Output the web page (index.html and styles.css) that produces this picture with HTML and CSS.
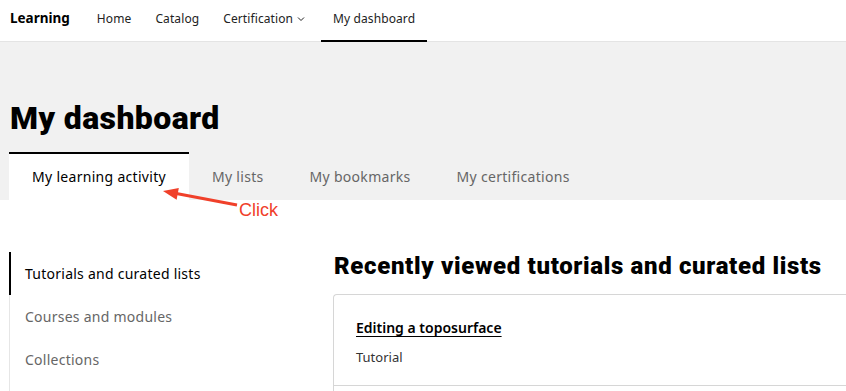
FILE: index.html
```html
<!DOCTYPE html>
<html lang="en">
<head>
  <meta charset="UTF-8">
  <meta name="viewport" content="width=device-width, initial-scale=1.0">
  <title>My dashboard</title>
  <link rel="stylesheet" href="styles.css">
</head>
<body>

<header class="topnav">
  <a class="brand" href="#">Learning</a>
  <nav class="topnav-links">
    <a href="#">Home</a>
    <a href="#">Catalog</a>
    <a href="#">Certification
      <svg class="chevron" width="8" height="6" viewBox="0 0 8 6"><path d="M1 1.5 L4 4.5 L7 1.5" fill="none" stroke="#222" stroke-width="1"/></svg>
    </a>
    <a href="#" class="active">My dashboard</a>
  </nav>
</header>

<section class="hero">
  <h1>My dashboard</h1>
  <div class="tabs">
    <a href="#" class="tab active">My learning activity</a>
    <a href="#" class="tab">My lists</a>
    <a href="#" class="tab">My bookmarks</a>
    <a href="#" class="tab">My certifications</a>
  </div>
</section>

<div class="annotation">
  <svg class="arrow" width="90" height="30" viewBox="0 0 90 30">
    <line x1="20" y1="12.3" x2="82" y2="24" stroke="#f0402a" stroke-width="3"/>
    <polygon points="8,10 21.6,18.7 23.8,6.9" fill="#f0402a"/>
  </svg>
  <span class="click">Click</span>
</div>

<main class="layout">
  <aside class="sidebar">
    <a href="#" class="side-item active">Tutorials and curated lists</a>
    <a href="#" class="side-item">Courses and modules</a>
    <a href="#" class="side-item">Collections</a>
  </aside>

  <section class="content">
    <h2>Recently viewed tutorials and curated lists</h2>
    <div class="card">
      <div class="card-row">
        <a href="#" class="card-title">Editing a toposurface</a>
        <div class="card-type">Tutorial</div>
      </div>
      <div class="card-row"></div>
    </div>
  </section>
</main>

</body>
</html>
```

FILE: styles.css
```css
body {
  margin: 0;
  font-family: "Noto Sans", sans-serif;
  color: #1a1a1a;
  background-color: #fff;
  overflow: hidden;
  position: relative;
}

a {
  color: inherit;
  text-decoration: none;
}

.topnav {
  display: flex;
  align-items: stretch;
  height: 42px;
  padding-left: 10px;
  border-bottom: 1px solid #e4e4e4;
  box-sizing: border-box;
}

.brand {
  display: flex;
  align-items: center;
  padding-bottom: 5px;
  font-weight: 700;
  font-size: 13.5px;
  color: #000;
  margin-right: 15px;
}

.topnav-links {
  display: flex;
}

.topnav-links a {
  display: flex;
  align-items: center;
  gap: 4px;
  padding: 0 12px 4px;
  font-size: 12px;
  letter-spacing: 0.1px;
  color: #222;
  border-bottom: 2px solid transparent;
  margin-bottom: -1px;
}

.topnav-links a.active {
  border-bottom-color: #000;
}

.chevron {
  margin: 1px 4px 0 0;
}

.hero {
  background-color: #f1f1f1;
  padding: 56px 9px 0;
}

h1 {
  margin: 0 0 14px 1px;
  font-family: Roboto, sans-serif;
  font-weight: 900;
  font-size: 32px;
  line-height: 40px;
  letter-spacing: 0.4px;
  color: #000;
}

.tabs {
  display: flex;
}

.tab {
  display: flex;
  align-items: center;
  height: 46px;
  padding: 0 23px;
  border-top: 2px solid transparent;
  font-size: 14px;
  line-height: 18px;
  letter-spacing: 0.3px;
  color: #666;
}

.tab.active {
  background-color: #fff;
  border-top-color: #000;
  color: #000;
}

.annotation {
  position: absolute;
  left: 155px;
  top: 181px;
}

.arrow {
  display: block;
}

.click {
  position: absolute;
  left: 84px;
  top: 20px;
  font-family: "Liberation Sans", sans-serif;
  font-size: 18px;
  line-height: 1;
  color: #f0402a;
}

.layout {
  display: flex;
  padding: 52px 0 0 9px;
}

.sidebar {
  width: 324px;
  box-sizing: border-box;
  flex-shrink: 0;
  display: flex;
  flex-direction: column;
  align-self: flex-start;
  border-left: 1px solid #e6e6e6;
  padding-bottom: 20px;
}

.side-item {
  display: flex;
  align-items: center;
  height: 43px;
  padding-left: 14px;
  margin-left: -1px;
  border-left: 2px solid transparent;
  font-size: 14px;
  letter-spacing: 0.25px;
  color: #666;
}

.side-item.active {
  border-left-color: #000;
  color: #000;
}

.content {
  flex: 1;
}

h2 {
  margin: 0 0 14px 1px;
  font-family: Roboto, sans-serif;
  font-weight: 900;
  font-size: 24px;
  line-height: 28px;
  letter-spacing: 0.65px;
  color: #000;
}

.card {
  border: 1px solid #d6d6d6;
  border-right: none;
  border-radius: 4px 0 0 0;
}

.card-row {
  padding: 21px 22px 19px;
  border-bottom: 1px solid #d6d6d6;
}

.card-title {
  display: inline-block;
  font-size: 14px;
  line-height: 19px;
  font-weight: 600;
  text-decoration: underline;
  text-underline-offset: 3px;
  color: #000;
}

.card-type {
  margin-top: 10px;
  font-size: 13px;
  line-height: 18px;
  color: #333;
}
```
